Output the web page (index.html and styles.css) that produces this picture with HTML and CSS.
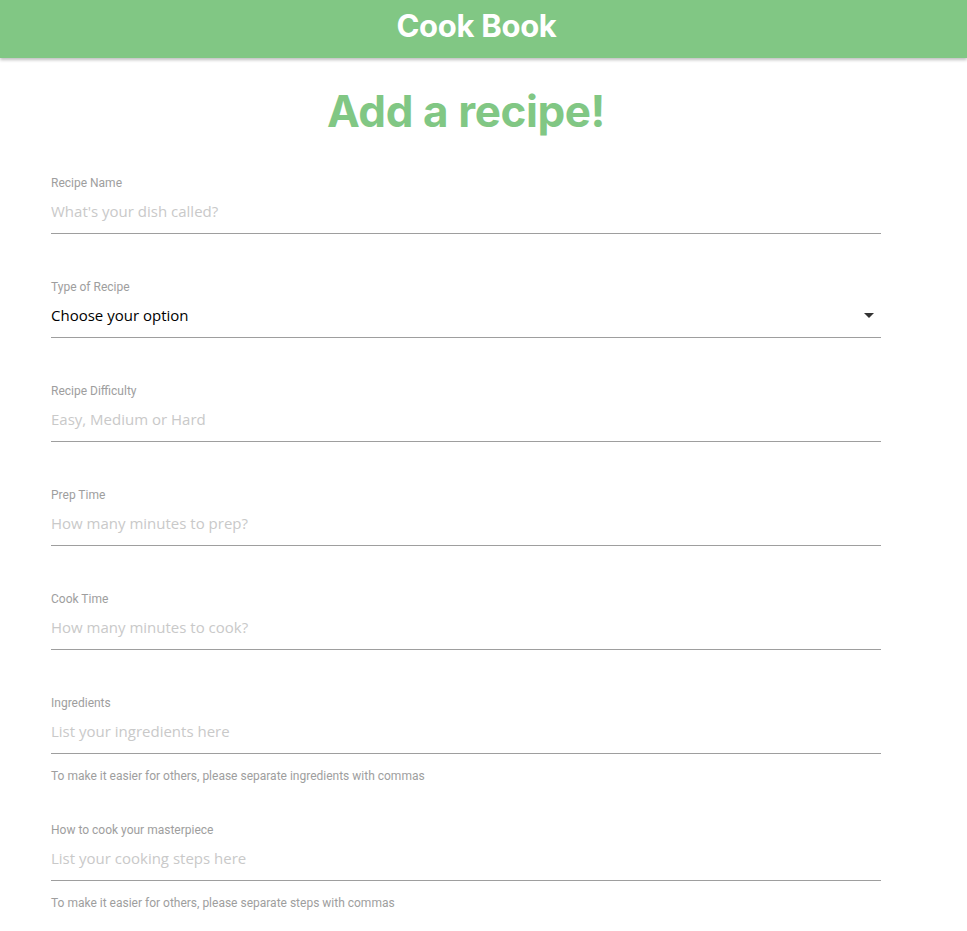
FILE: index.html
```html
<!DOCTYPE html>
<html lang="en">
<head>
<meta charset="utf-8">
<title>Cook Book</title>
<link rel="stylesheet" href="styles.css">
</head>
<body>
<header class="topbar">
  <span class="brand">Cook Book</span>
</header>
<main class="container">
  <h1 class="page-title">Add a recipe!</h1>
  <form class="recipe-form">
    <div class="field">
      <label class="field-label" for="name">Recipe Name</label>
      <input class="field-input" id="name" type="text" placeholder="What's your dish called?">
    </div>
    <div class="field">
      <label class="field-label">Type of Recipe</label>
      <div class="select">
        <span class="select-value">Choose your option</span>
        <svg class="caret" width="24" height="24" viewBox="0 0 24 24"><path d="M7 10l5 5 5-5z" fill="#333"/></svg>
      </div>
    </div>
    <div class="field">
      <label class="field-label" for="diff">Recipe Difficulty</label>
      <input class="field-input" id="diff" type="text" placeholder="Easy, Medium or Hard">
    </div>
    <div class="field">
      <label class="field-label" for="prep">Prep Time</label>
      <input class="field-input" id="prep" type="text" placeholder="How many minutes to prep?">
    </div>
    <div class="field">
      <label class="field-label" for="cook">Cook Time</label>
      <input class="field-input" id="cook" type="text" placeholder="How many minutes to cook?">
    </div>
    <div class="field field-helper">
      <label class="field-label" for="ing">Ingredients</label>
      <input class="field-input" id="ing" type="text" placeholder="List your ingredients here">
      <span class="helper">To make it easier for others, please separate ingredients with commas</span>
    </div>
    <div class="field field-helper">
      <label class="field-label" for="steps">How to cook your masterpiece</label>
      <input class="field-input" id="steps" type="text" placeholder="List your cooking steps here">
      <span class="helper">To make it easier for others, please separate steps with commas</span>
    </div>
  </form>
</main>
</body>
</html>
```
FILE: styles.css
```css
html, body {
  margin: 0;
  padding: 0;
  background: #ffffff;
}
body {
  font-family: Roboto, "Liberation Sans", sans-serif;
}
.topbar {
  box-sizing: border-box;
  height: 58px;
  background: #81c784;
  display: flex;
  align-items: center;
  justify-content: center;
  box-shadow: 0 2px 3px rgba(0,0,0,0.25);
  padding-right: 14px;
  padding-bottom: 8px;
}
.brand {
  color: #ffffff;
  font-family: Inter, Roboto, sans-serif;
  font-weight: 700;
  font-size: 31px;
  letter-spacing: -0.3px;
}
.container {
  width: 830px;
  margin-left: 51px;
}
.page-title {
  margin: 26px 0 0;
  height: 54px;
  line-height: 54px;
  text-align: center;
  color: #81c784;
  font-family: Inter, Roboto, sans-serif;
  font-weight: 700;
  font-size: 44px;
  letter-spacing: -0.4px;
}
.recipe-form {
  margin-top: 37px;
  display: flex;
  flex-direction: column;
}
.field {
  display: flex;
  flex-direction: column;
  margin-bottom: 45px;
}
.field-helper {
  margin-bottom: 38px;
}
.field-label {
  display: block;
  height: 16px;
  line-height: 16px;
  font-size: 12px;
  color: #9e9e9e;
  font-family: Roboto, sans-serif;
}
.field-input {
  box-sizing: content-box;
  height: 40px;
  padding: 0 0 2px;
  margin: 0;
  border: none;
  border-bottom: 1px solid #9e9e9e;
  outline: none;
  background: transparent;
  font-family: "Open Sans", "Noto Sans", sans-serif;
  font-size: 15px;
  color: #000;
}
.field-input::placeholder {
  color: #c9c9c9;
}
.select {
  box-sizing: content-box;
  height: 40px;
  padding-bottom: 2px;
  border-bottom: 1px solid #9e9e9e;
  display: flex;
  align-items: center;
  justify-content: space-between;
  font-family: "Open Sans", "Noto Sans", sans-serif;
  font-size: 15px;
  color: #000;
}
.caret {
  margin-right: 0;
}
.helper {
  margin-top: 14px;
  height: 16px;
  line-height: 16px;
  font-size: 12px;
  color: #9e9e9e;
  font-family: Roboto, sans-serif;
}
```
